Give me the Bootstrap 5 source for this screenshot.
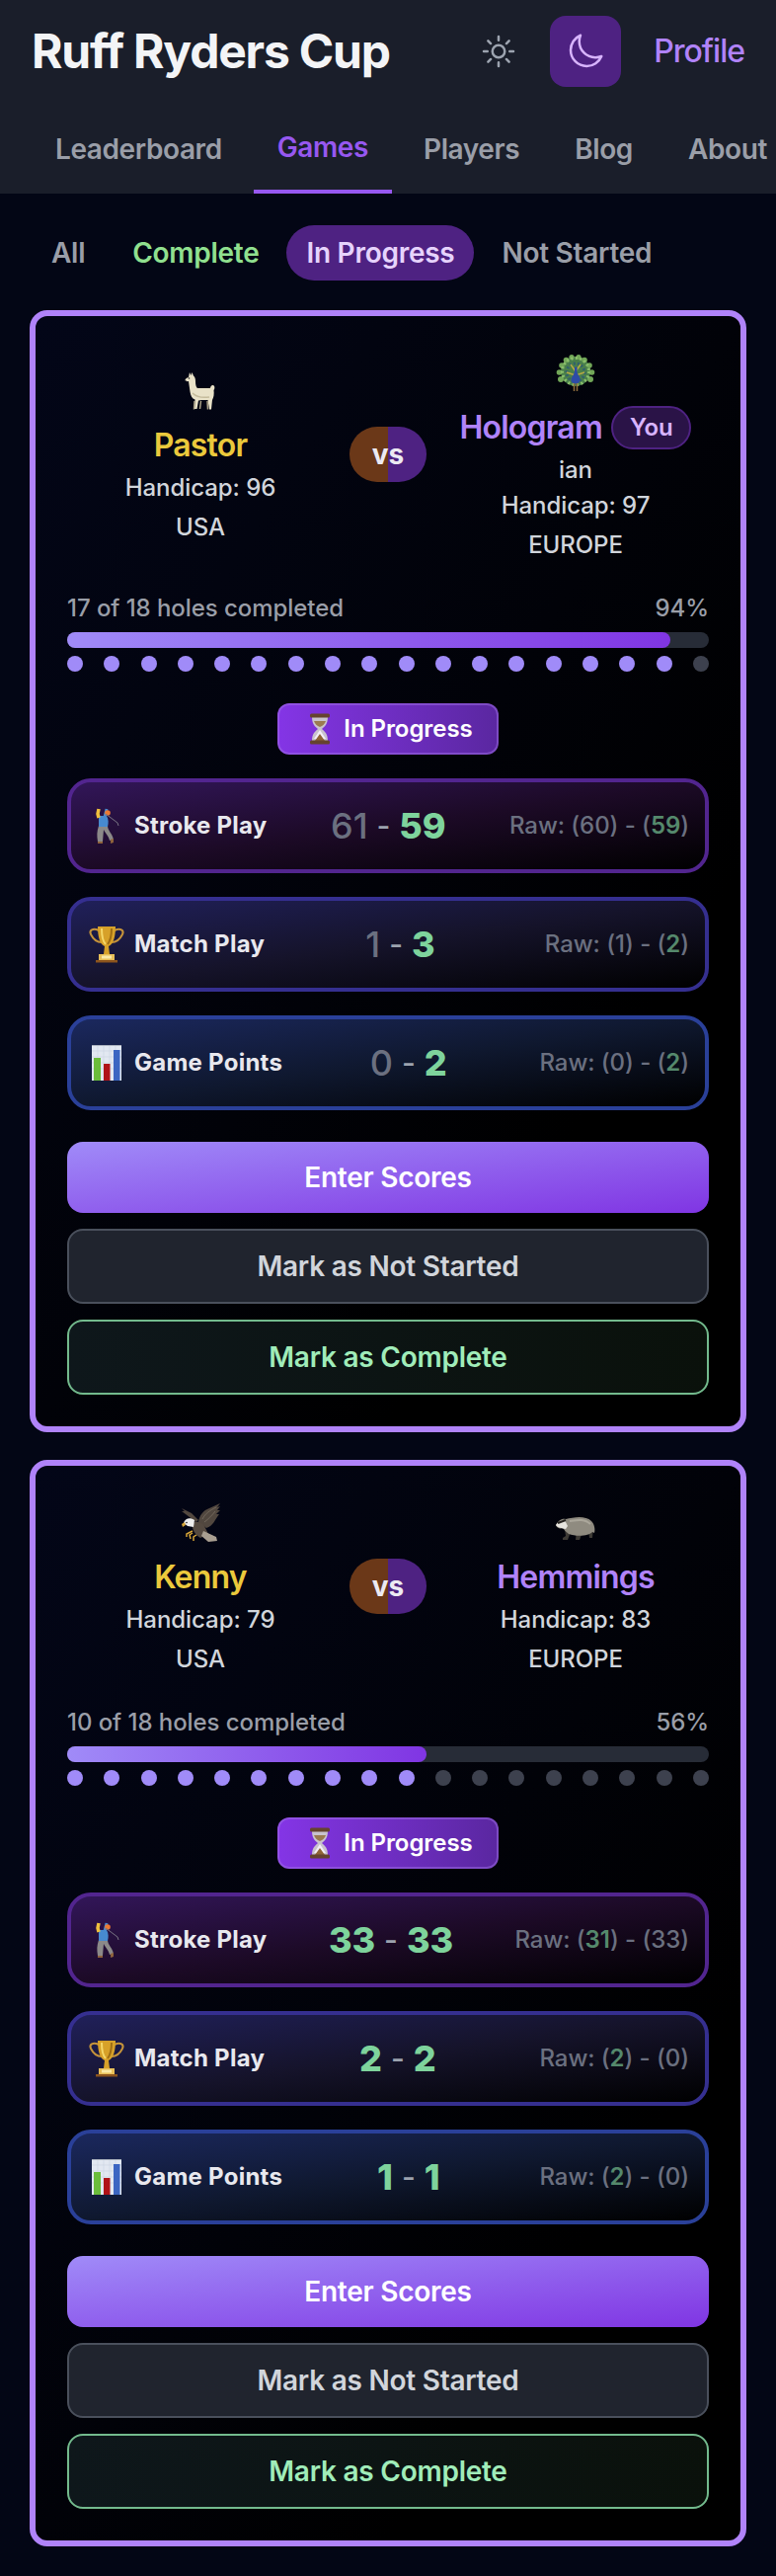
<!DOCTYPE html>
<html lang="en">
<head>
    <meta charset="UTF-8">
    <meta name="viewport" content="width=device-width, initial-scale=1">
    <title>Ruff Ryders Cup</title>

    <link href="https://cdn.jsdelivr.net/npm/bootstrap@5.3.0/dist/css/bootstrap.min.css" rel="stylesheet">

    <style>
        body { background: #030615; color: #d1d5db; font-family: Inter, "Liberation Sans", sans-serif; font-size: 24px; font-weight: 475; letter-spacing: -.06px; line-height: 32px; min-height: 2608px; overflow-x: hidden; }
        .site-header { background: #1a1e2a; height: 196px; overflow: hidden; }
        .top-bar { height: 104px; padding: 0 32px; }
        .site-title { font-size: 48px; font-weight: 700; letter-spacing: -1.2px; color: #f3f4f6; line-height: 56px; }
        .theme-btn { width: 72px; height: 72px; border-radius: 16px; color: #9ca3af; }
        .theme-btn.active { background: #4e2282; color: #d8b4fe; }
        .profile-link { font-size: 32px; letter-spacing: -1px; color: #b083f9; margin-left: 33px; }
        .tabs { height: 92px; padding-left: 32px; gap: 8px; }
        .tabs a { padding: 1px 24px 0; font-size: 28px; font-weight: 600; letter-spacing: -.4px; color: #9a9ea8; white-space: nowrap; }
        .tabs a.active { color: #9758f0; border-bottom: 4px solid #9758f0; }
        .filters { padding: 32px 32px 0; gap: 8px; }
        .filters a { padding: 8px 20px; line-height: 40px; font-size: 28px; font-weight: 600; letter-spacing: -.27px; color: #9a9ea8; border-radius: 28px; }
        .filters a.done { color: #90e08f; }
        .filters a.active { background: #4e2282; color: #e6d3fc; }

        .games { padding: 30px 30px 0; gap: 28px; }
        .game { border: 6px solid #b083f9; border-radius: 18px; padding: 32px; background: linear-gradient(to bottom right, #030618, #000 75%); }
        .player { flex: 1 1 0; }
        .player .avatar { height: 57px; padding-top: 6px; }
        .player .avatar svg { width: 40px; height: 40px; }
        .player .nick { height: 48px; font-size: 32px; font-weight: 600; letter-spacing: -.8px; gap: 9px; margin-bottom: 3px; white-space: nowrap; }
        .usa .nick { color: #ebc93c; }
        .europe .nick { color: #b083f9; }
        .you { height: 44px; padding: 0 17px; border: 2px solid #4e2282; border-radius: 22px; background: #2a1347; color: #d8b4fe; font-size: 24px; font-weight: 600; letter-spacing: -.2px; }
        .real-name { margin-bottom: 4px; }
        .versus { width: 78px; height: 56px; border-radius: 28px; background: linear-gradient(to right, #6b3818 50%, #4e2282 50%); color: #eceaf2; font-size: 28px; font-weight: 700; }
        .holes { margin: 32px 0 8px; color: #9a9ea8; }
        .track { height: 16px; border-radius: 8px; background: #272c37; }
        .track div { height: 16px; border-radius: 8px; background: linear-gradient(to right, #a08bf8, #8035e3); }
        .dots { margin-top: 8px; }
        .dots i { width: 16px; height: 16px; border-radius: 50%; background: #3d414e; }
        .dots i.played { background: #a08bf8; }
        .state { height: 52px; margin: 32px 0 24px; padding: 0 24px 0 25px; gap: 8px; border: 2px solid rgba(160, 110, 230, .5); border-radius: 12px; background: linear-gradient(to right, #8435e6, #5a27a0) border-box; color: #fff; font-weight: 600; }
        .state svg { width: 32px; height: 32px; }
        .score-row { height: 96px; border: 4px solid; border-radius: 24px; padding: 0 16px 0 17px; }
        .score-row .kind { font-weight: 750; letter-spacing: .25px; color: #e8e8ee; gap: 9px; }
        .score-row .kind svg { width: 38px; height: 38px; }
        .stroke-play { border-color: #52258f; background: linear-gradient(to bottom right, #321659, #1c0a26 50%, #000); }
        .match-play { border-color: #352f90; background: linear-gradient(to bottom right, #20205a, #15132a 50%, #000); }
        .game-points { border-color: #2a4099; background: linear-gradient(to bottom right, #1b285e, #0f182f 50%, #000); }
        .points { font-size: 36px; gap: 9px; color: #6b7080; }
        .points b { color: #7ed39c; font-weight: 800; }
        .points .dash { font-size: 30px; color: #9ca3af; }
        .raw { color: #6b7080; }
        .raw b { color: #55896c; font-weight: 600; }
        .match-play .raw { padding-left: 9px; }
        .game-points .raw { padding-left: 5px; }
        .actions { margin-top: 32px; gap: 16px; }
        .actions .btn { height: 76px; padding: 0; border: 2px solid; border-radius: 16px; font-size: 28px; font-weight: 600; letter-spacing: -.25px; }
        .actions .enter { height: 72px; border: 0; color: #fff; background: linear-gradient(to bottom right, #a08bf8, #8035e3); }
        .actions .not-started { color: #d1d5db; border-color: #4a505c; background: #20242e; }
        .actions .complete { color: #a0ecb9; border-color: #73ba8d; background: linear-gradient(to right, #0e171b, #0a110b); }
    </style>
</head>
<body>
    <!-- Icon set -->
    <svg class="d-none">
        <symbol id="llama" viewBox="0 0 40 40">
            <path d="M9 1l1.500 3 1-3 1.500 3.500c1.500 1 2 3 2 5.500 0 3 .5 6 2 7h13c0-2 1.500-3.500 3-3 2 1 1.500 4 .5 5 .5 4 0 7-1.500 10l-1 9.500h-2l-1.500-9.500h-6l-3.500.5-1.500 8.500h-2.500l.5-9.500c-3-1-4.500-4-5-8L8 10c-1 .3-3 .3-3.500-1 0-1.500 1.500-2.500 3.500-3z" fill="#e9e2c8"/>
            <path d="M14 30l-.5 8.500M20.500 30l-1 8M27 30l.500 8.500" stroke="#aaa187" stroke-width="1.500"/>
            <path d="M12 22c4 4 10 5 17 4" fill="none" stroke="#c5bc9c" stroke-width="1.500"/>
            <circle cx="8.500" cy="7" r=".8" fill="#222"/>
        </symbol>
        <symbol id="peacock" viewBox="0 0 40 40">
            <g fill="#72a758">
                <circle cx="20" cy="18" r="15" fill="#4a7f4b"/>
                <circle cx="5" cy="26" r="3"/><circle cx="3.500" cy="19" r="2.800"/><circle cx="6" cy="12" r="2.800"/><circle cx="10.500" cy="6.500" r="2.800"/><circle cx="16" cy="3.500" r="2.600"/><circle cx="23" cy="3.500" r="2.600"/><circle cx="29" cy="6.500" r="2.800"/><circle cx="34" cy="12" r="2.800"/><circle cx="36.500" cy="19" r="2.800"/><circle cx="35" cy="26" r="3"/>
            </g>
            <circle cx="20" cy="18" r="13.500" fill="none" stroke="#8cc06c" stroke-width="3" stroke-dasharray="2 2.500"/>
            <circle cx="20" cy="19" r="9" fill="none" stroke="#32616c" stroke-width="3" stroke-dasharray="2 2"/>
            <path d="M20 18l-5-7M20 18l5-7M20 22l-9-3M20 22l9-3" stroke="#b8a943" stroke-width="1.500"/>
            <path d="M19 14c2.500-2 3 1 2.500 4 0 3 3 5 3 8s-2 4.500-4.500 4.500-5-1.500-4.500-4.500 3.500-5 3.500-8z" fill="#2d4ba6"/>
            <path d="M18.500 30v8M21.500 30v8" stroke="#8d6c3c" stroke-width="1.500"/>
        </symbol>
        <symbol id="eagle" viewBox="0 0 40 40">
            <path d="M15 19L9 14 1 8l3 0-3-3 10 5 7 7zM18 19c1-7 5-12 11-14L40 0l-3 4 3-1-3 4 3 0-4 4 3 0c-4 5-6 12-13 14z" fill="#51473f"/>
            <path d="M22 16c3-6 8-9 14-12M24 19c4-3 8-7 11-11" fill="none" stroke="#72675c"/>
            <path d="M12 20c5-3 11 0 13 5l3 6-8 4c-5-3-9-8-8-15z" fill="#554a41"/>
            <path d="M23 28l13 6 1 4-9 1-7-6z" fill="#a99f91"/>
            <path d="M3 20c1-5 7-6 11-3l-1 7-6-1z" fill="#eee"/>
            <path d="M4 19l-3 2 1 3 3-2z" fill="#d6a538"/>
            <path d="M12 28l-6 3v3M12 30l-3 2 1 4M16 32l-3 2v4" fill="none" stroke="#d6a538" stroke-width="1.500"/>
            <circle cx="6" cy="19.500" r=".8" fill="#222"/>
        </symbol>
        <symbol id="badger" viewBox="0 0 40 40">
            <path d="M9 26l1 7-3 2v2h5l3-8zM21 28l-1 9h4l3-8zM33 26l1 9h3l1-12z" fill="#3d3a35"/>
            <path d="M0 22c2-4 6-7 10-6 8-2 20-4 26 2 3 3 4 8 3 12l-2-1c-3 4-16 5-24 2-3-2-5-5-6-6-3 1-6 0-7-3z" fill="#8f8b80"/>
            <path d="M0 22c2-3 5-5 9-5l3 6-2 3c-4-1-8-1-10-4z" fill="#e6e4de"/>
            <path d="M2 20l8-3" stroke="#24221f" stroke-width="2"/>
            <path d="M14 18c7-1 15-3 21 3" fill="none" stroke="#aba79b" stroke-width="2"/>
        </symbol>
        <symbol id="hourglass" viewBox="0 0 32 32">
            <path d="M8 3h16c0 6-1 9-6 13 5 4 6 7 6 13H8c0-6 1-9 6-13C9 12 8 9 8 3z" fill="#c9c3cd"/>
            <path d="M10 8h12c-1 3-3 5-6 6-3-1-5-3-6-6z" fill="#9b7b50"/>
            <path d="M16 17l6 9H10z" fill="#f3eff8"/>
            <path d="M16 21l5 7H11z" fill="#8f6436"/>
            <rect x="6" y="0.500" width="20" height="4" rx="1.500" fill="#65432e"/>
            <rect x="6" y="27.500" width="20" height="4" rx="1.500" fill="#65432e"/>
        </symbol>
        <symbol id="golfer" viewBox="0 0 38 38">
            <path d="M11 19h9c0 5 5 8 6 14l-4 1c-1-5-4-7-6-11l-1 12h-5c-1-6-1-10 1-16z" fill="#8b8989"/>
            <path d="M11 9l8 0c2 3 2 7 1 11h-9z" fill="#478ad0"/>
            <path d="M11 11l-1-4 1-5" fill="none" stroke="#efc03d" stroke-width="3.500"/>
            <path d="M17 10l2-8" stroke="#478ad0" stroke-width="3"/>
            <circle cx="20" cy="6" r="2.800" fill="#ed7a32"/>
            <path d="M18 7l12 9 1 3" fill="none" stroke="#777482"/>
            <path d="M10 35h5v2h-5zM23 33l3-1 0 4-3 1z" fill="#8e623c"/>
        </symbol>
        <symbol id="trophy" viewBox="0 0 38 38">
            <path d="M11 5C5 2 1 5 3 9c2 4 5 8 11 8M27 5c6-3 10 0 8 4-2 4-5 8-11 8" fill="none" stroke="#c5933a" stroke-width="2"/>
            <path d="M10 1h18c0 10-2 18-7 20l1 8h-6l1-8c-5-2-7-10-7-20z" fill="#d7a129"/>
            <path d="M14 3c0 8 1 13 4 16" stroke="#f5d768" stroke-width="2" fill="none"/>
            <path d="M24 3c0 8-1 12-4 16" stroke="#9e6d14" stroke-width="2" fill="none"/>
            <path d="M11 29h16v6H11z" fill="#e8bf58"/>
            <path d="M14 30.500h10v3H14z" fill="#fae9a6"/>
            <path d="M8 35h22v2.500H8z" fill="#8d551d"/>
        </symbol>
        <symbol id="chart" viewBox="0 0 38 38">
            <path d="M4 1h30v36H4z" fill="#e2e8f1"/>
            <path d="M4 7h30M4 13h30M4 19h30M4 25h30M10 1v36M16 1v36M22 1v36M28 1v36" stroke="#cdd6e4" stroke-width=".7"/>
            <path d="M4 1.500h30" stroke="#aeb5c0"/>
            <path d="M6 14h7v23H6z" fill="#6bbd3b"/>
            <path d="M16 20h6.500v17H16z" fill="#b01218"/>
            <path d="M26 6h6.500v31H26z" fill="#3c66c2"/>
        </symbol>
    </svg>

    <header class="site-header">
        <div class="top-bar d-flex align-items-center">
            <div class="site-title me-auto">Ruff Ryders Cup</div>
            <div class="theme-btn d-flex align-items-center justify-content-center me-3">
                <svg width="40" height="40" viewBox="0 0 24 24" fill="none" stroke="currentColor" stroke-width="1.500" stroke-linecap="round"><path d="M12 3v2.250m6.364.386l-1.591 1.591M21 12h-2.250m-.386 6.364l-1.591-1.591M12 18.750V21m-4.773-4.227l-1.591 1.591M5.250 12H3m4.227-4.773L5.636 5.636M15.750 12a3.750 3.750 0 11-7.500 0 3.750 3.750 0 017.500 0z"/></svg>
            </div>
            <div class="theme-btn active d-flex align-items-center justify-content-center">
                <svg width="40" height="40" viewBox="0 0 24 24" fill="none" stroke="currentColor" stroke-width="1.500" stroke-linecap="round" stroke-linejoin="round"><path d="M21.752 15.002A9.718 9.718 0 0118 15.750c-5.385 0-9.750-4.365-9.750-9.750 0-1.330.266-2.597.748-3.752A9.753 9.753 0 003 11.250C3 16.635 7.365 21 12.750 21a9.753 9.753 0 009.002-5.998z"/></svg>
            </div>
            <a class="profile-link text-decoration-none" href="#">Profile</a>
        </div>
        <nav class="tabs d-flex">
            <a class="d-flex align-items-center text-decoration-none" href="#">Leaderboard</a>
            <a class="d-flex align-items-center text-decoration-none active" href="#">Games</a>
            <a class="d-flex align-items-center text-decoration-none" href="#">Players</a>
            <a class="d-flex align-items-center text-decoration-none" href="#">Blog</a>
            <a class="d-flex align-items-center text-decoration-none" href="#">About</a>
        </nav>
    </header>

    <nav class="filters d-flex">
        <a class="text-decoration-none" href="#">All</a>
        <a class="text-decoration-none done" href="#">Complete</a>
        <a class="text-decoration-none active" href="#">In Progress</a>
        <a class="text-decoration-none" href="#">Not Started</a>
    </nav>

    <main class="games d-flex flex-column" id="games"></main>

    <script src="https://cdn.jsdelivr.net/npm/bootstrap@5.3.0/dist/js/bootstrap.bundle.min.js"></script>
    <script>
        const games = [
            {
                usa: { nick: "Pastor", icon: "llama", handicap: 96 },
                europe: { nick: "Hologram", icon: "peacock", handicap: 97, you: true, name: "ian" },
                played: 17, percent: 94,
                // the flags tell which side is shown as the winner
                stroke: { points: [61, 59], win: [0, 1], raw: [60, 59], rawWin: [0, 1] },
                match: { points: [1, 3], win: [0, 1], raw: [1, 2], rawWin: [0, 1] },
                total: { points: [0, 2], win: [0, 1], raw: [0, 2], rawWin: [0, 1] }
            },
            {
                usa: { nick: "Kenny", icon: "eagle", handicap: 79 },
                europe: { nick: "Hemmings", icon: "badger", handicap: 83 },
                played: 10, percent: 56,
                stroke: { points: [33, 33], win: [1, 1], raw: [31, 33], rawWin: [1, 0] },
                match: { points: [2, 2], win: [1, 1], raw: [2, 0], rawWin: [1, 0] },
                total: { points: [1, 1], win: [1, 1], raw: [2, 0], rawWin: [1, 0] }
            }
        ];

        function player(p, team) {
            return `<div class="player ${team} text-center">
                <div class="avatar d-flex justify-content-center"><svg><use href="#${p.icon}"/></svg></div>
                <div class="nick d-flex align-items-center justify-content-center">${p.nick}${p.you ? '<span class="you d-flex align-items-center">You</span>' : ""}</div>
                ${p.name ? `<div class="real-name">${p.name}</div>` : ""}
                <div class="mb-2">Handicap: ${p.handicap}</div>
                <div>${team.toUpperCase()}</div>
            </div>`;
        }

        function mark(value, win) {
            return win ? `<b>${value}</b>` : `<span>${value}</span>`;
        }

        function scoreRow(s, cls, icon, title) {
            return `<div class="score-row ${cls} d-flex align-items-center justify-content-between">
                <div class="kind d-flex align-items-center"><svg><use href="#${icon}"/></svg><span>${title}</span></div>
                <div class="points d-flex align-items-center">${mark(s.points[0], s.win[0])}<span class="dash">-</span>${mark(s.points[1], s.win[1])}</div>
                <div class="raw">Raw: (${mark(s.raw[0], s.rawWin[0])}) - (${mark(s.raw[1], s.rawWin[1])})</div>
            </div>`;
        }

        function gameCard(g) {
            let dots = "";
            for (let i = 0; i < 18; i++) dots += `<i class="${i < g.played ? "played" : ""}"></i>`;
            return `<section class="game">
                <div class="d-flex align-items-center gap-3">
                    ${player(g.usa, "usa")}
                    <div class="versus d-flex align-items-center justify-content-center">vs</div>
                    ${player(g.europe, "europe")}
                </div>
                <div class="holes d-flex justify-content-between"><span>${g.played} of 18 holes completed</span><span>${g.percent}%</span></div>
                <div class="track"><div style="width: ${g.percent}%"></div></div>
                <div class="dots d-flex justify-content-between">${dots}</div>
                <div class="d-flex justify-content-center">
                    <div class="state d-flex align-items-center"><svg><use href="#hourglass"/></svg>In Progress</div>
                </div>
                <div class="d-flex flex-column gap-4">
                    ${scoreRow(g.stroke, "stroke-play", "golfer", "Stroke Play")}
                    ${scoreRow(g.match, "match-play", "trophy", "Match Play")}
                    ${scoreRow(g.total, "game-points", "chart", "Game Points")}
                </div>
                <div class="actions d-flex flex-column">
                    <button class="btn enter">Enter Scores</button>
                    <button class="btn not-started">Mark as Not Started</button>
                    <button class="btn complete">Mark as Complete</button>
                </div>
            </section>`;
        }

        document.getElementById("games").innerHTML = games.map(gameCard).join("");
    </script>
</body>
</html>
